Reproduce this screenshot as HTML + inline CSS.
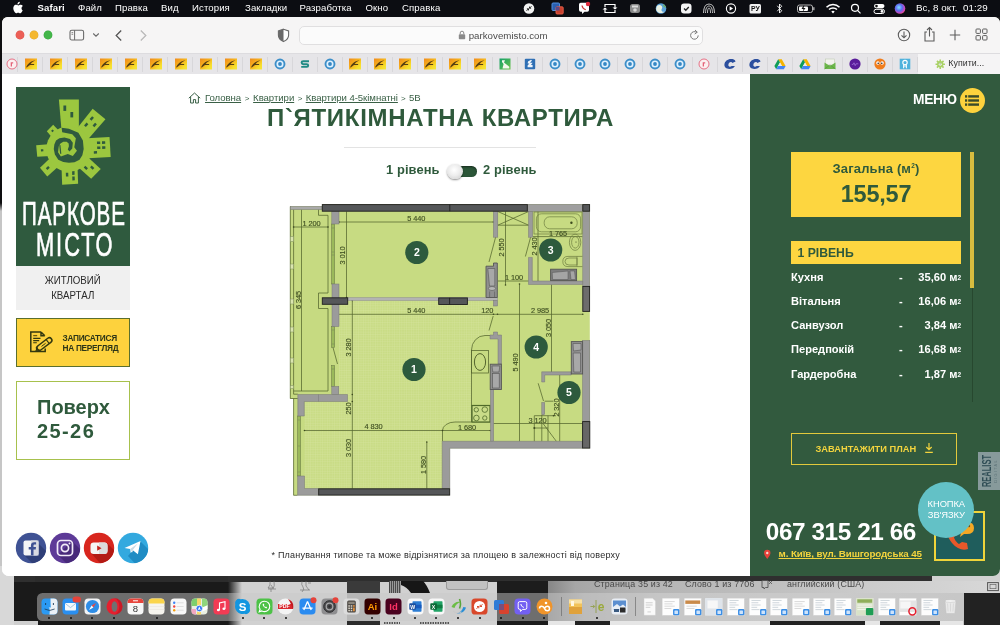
<!DOCTYPE html>
<html lang="uk">
<head>
<meta charset="utf-8">
<title>Паркове Місто</title>
<style>
*{box-sizing:border-box;margin:0;padding:0}
html,body{width:1000px;height:625px;overflow:hidden;background:#1b1b1b;font-family:"Liberation Sans",sans-serif;}
.abs{position:absolute}
#screen{position:absolute;left:0;top:0;width:1000px;height:625px;overflow:hidden;background:#1b1b1b;will-change:transform;transform:translateZ(0)}
/* menu bar */
#menubar{position:absolute;left:0;top:0;width:1000px;height:17px;background:#0c0d12;color:#fff;font-size:9.6px;line-height:17px;white-space:nowrap}
#menubar span{position:absolute;top:-1.300px;height:17px;letter-spacing:0.1px}
/* safari window */
#win{position:absolute;left:2px;top:16.500px;width:998px;height:559.500px;border-radius:6px 6px 7px 7px;overflow:hidden;background:#fff}
#toolbar{position:absolute;left:0;top:0;width:998px;height:36.500px;background:#f6f5f5}
#tabs{position:absolute;left:0;top:36.500px;width:998px;height:21px;background:#e6e5e8;border-top:1px solid #dddcdf}
#tabs .sep{position:absolute;top:3px;width:1px;height:15px;background:#d8d7da}
#tabs .ic{position:absolute;top:4px;width:12px;height:12px}
#urlbar{position:absolute;left:297px;top:9px;width:404px;height:19px;border-radius:5px;background:#fbfbfb;border:1px solid #e0dfe0}
#page{position:absolute;left:0;top:57.200px;width:998px;height:503px;background:#fff;overflow:hidden}
#right{position:absolute;left:748px;top:0;width:250px;height:503px;background:#325a3e}
</style>
</head>
<body>
<div id="screen">
<!-- desktop / other windows visible below safari -->
<div class="abs" style="left:0;top:17px;width:3px;height:608px;background:linear-gradient(180deg,#0e0e10 0,#0e0e10 186px,#c6c6c6 194px,#c6c6c6 100%)"></div>
<div class="abs" style="left:0;top:566px;width:14px;height:59px;background:#d8d8d8"></div>
<div class="abs" style="left:14px;top:570px;width:228px;height:55px;background:#1a1a1a"></div>
<div class="abs" style="left:14px;top:620.500px;width:24px;height:5px;background:#cfcfcf"></div>
<div class="abs" style="left:240px;top:566px;width:760px;height:59px;background:#d1d1d1"></div>
<div class="abs" style="left:228px;top:570px;width:14px;height:55px;background:linear-gradient(90deg,#1a1a1a,#d1d1d1)"></div>
<!-- dark strip under the window -->
<div class="abs" style="left:14px;top:574px;width:918px;height:7.500px;background:#2f2f2f"></div>
<div class="abs" style="left:35px;top:574px;width:193px;height:8px;background:#2c2c2c"></div>
<!-- fragments of the document behind -->
<div class="abs" style="left:347px;top:581px;width:33px;height:12px;background:#3a3a3a"></div><div class="abs" style="left:347px;top:593px;width:33px;height:28px;background:#a6a6a6"></div><div class="abs" style="left:347px;top:621px;width:33px;height:4px;background:#2c2c2c"></div>
<div class="abs" style="left:389px;top:581px;width:12px;height:12px;background:repeating-linear-gradient(90deg,#4a4a4a 0,#4a4a4a 1px,#9a9a9a 1px,#9a9a9a 2px)"></div><svg class="abs" style="left:401px;top:581px" width="30" height="12" viewBox="0 0 30 12"><path d="M0,0H22Q26,4 29,12H10Q6,6 0,4z" fill="#161616"/></svg>
<div class="abs" style="left:445.500px;top:581px;width:42px;height:9px;background:#c2c2c2;border:1px solid #9c9c9c;border-top:none;border-radius:0 0 3px 3px"></div><svg class="abs" style="left:262px;top:581px" width="70" height="12" viewBox="0 0 70 12"><g fill="none" stroke="#6a6a6a" stroke-width=".6"><path d="M8,0v4l-2,3h5l-2,-3M12,0q1,5 -1,8M6,8h8M9,8v3"/><path d="M40,0q-1,4 1,6t-1,5M44,0v5l3,4M38,9h10M46,2h3"/></g></svg><svg class="abs" style="left:384px;top:621px" width="70" height="4" viewBox="0 0 70 4"><path d="M0,2H16M36,2H66" stroke="#555" stroke-width="2" stroke-dasharray="1.500 1"/></svg>
<div class="abs" style="left:497px;top:581px;width:51px;height:44px;background:#1c1c1c"></div>
<!-- word status bar -->
<div class="abs" style="left:548px;top:581px;width:452px;height:12px;background:linear-gradient(90deg,#868686 0,#a6a6a6 6%,#b4b4b4 20%,#bdbdbd 45%,#cbcbcb 70%,#d8d8d8 100%)"></div>
<div class="abs" style="left:548px;top:593px;width:452px;height:32px;background:linear-gradient(90deg,#8a8a8a 0,#b0b0b0 8%,#c4c4c4 25%,#cccccc 60%,#c4c4c4 100%)"></div>
<div class="abs" style="left:963.500px;top:593px;width:37px;height:32px;background:#222"></div>
<div class="abs" style="left:548px;top:621px;width:415px;height:4px;background:#e6e6e6"></div>
<div class="abs" style="left:575px;top:621px;width:35px;height:4px;background:#222"></div>
<div class="abs" style="left:770px;top:621px;width:95px;height:4px;background:#222"></div>
<div class="abs" style="left:880px;top:621px;width:60px;height:4px;background:#222"></div>
<div class="abs" style="left:594px;top:579.300px;font-size:8.900px;color:#4a4a4a;white-space:nowrap;letter-spacing:.15px">Страница 35 из 42</div>
<div class="abs" style="left:685px;top:579.300px;font-size:8.900px;color:#4a4a4a;white-space:nowrap;letter-spacing:.15px">Слово 1 из 7706</div>
<div class="abs" style="left:787px;top:579.300px;font-size:8.900px;color:#4a4a4a;white-space:nowrap;letter-spacing:.15px">английский (США)</div>
<svg class="abs" style="left:760px;top:579px" width="14" height="12" viewBox="0 0 14 12"><path d="M2 1.500h6v7H5.500L4 10V8.500H2z" fill="none" stroke="#555" stroke-width=".9"/><path d="M9 2l3 3M12 2l-3 3" stroke="#555" stroke-width=".8"/></svg>
<svg class="abs" style="left:987px;top:581.500px" width="12" height="10" viewBox="0 0 12 10"><rect x=".6" y=".6" width="10.800" height="8" fill="none" stroke="#555" stroke-width="1"/><rect x="3" y="2.500" width="6" height="4.200" fill="none" stroke="#555" stroke-width=".6"/></svg>
<div id="menubar">
<svg class="abs" style="left:13.400px;top:1.200px" width="11" height="12.900" viewBox="0 0 170 200"><path fill="#fff" d="M150 145c-4 9-6 13-11 21-7 11-17 25-30 25-11 0-14-7-29-7s-18 7-29 7c-13 0-22-12-29-23C1 137-1 101 12 82c9-14 23-22 37-22s23 8 35 8c11 0 18-8 35-8 12 0 25 7 34 18-30 16-25 59-3 67zM97 40c6-8 11-19 9-30-10 1-21 7-28 15-6 8-11 19-9 29 11 0 22-6 28-14z"/></svg>
<span style="left:37.500px;font-weight:bold">Safari</span>
<span style="left:78px">Файл</span>
<span style="left:115px">Правка</span>
<span style="left:161px">Вид</span>
<span style="left:192px">История</span>
<span style="left:245px">Закладки</span>
<span style="left:299.500px">Разработка</span>
<span style="left:365.500px">Окно</span>
<span style="left:402px">Справка</span>
<!-- status icons -->
<svg class="abs" style="left:520px;top:0" width="480" height="17" viewBox="520 0 480 17">
 <circle cx="529" cy="8.500" r="5.300" fill="#f2f2f2"/><path d="M526.500 10.800l2-2m0 0v1.600m0-1.600h-1.600M531.500 6.200l-2 2m0 0V6.600m0 1.600h1.600" stroke="#111" stroke-width=".9" fill="none"/>
 <rect x="552" y="3" width="7.500" height="7.500" rx="1" fill="#2a5fb0" stroke="#4f8fe0" stroke-width="1"/><rect x="556" y="6.800" width="7.200" height="7.200" rx="1" fill="#c8402e" stroke="#e8604a" stroke-width=".9"/><path d="M556,6.800h3.500v3.700H556z" fill="#5a4a8a"/>
 <path d="M579 4.500q0-1.700 1.700-1.700h6.600q1.700 0 1.700 1.700v5.600q0 1.700-1.700 1.700h-2.800l-2.500 2.200v-2.200h-1.300q-1.700 0-1.700-1.700z" fill="#fff"/><circle cx="588" cy="4" r="2.200" fill="#e02a3c"/><path d="M582 5.500c.3 2 1.800 3.600 3.800 4.200" stroke="#c33" stroke-width="1.200" fill="none"/>
 <path d="M605 7V4.500h10V9M615 10v2.500h-10V8" fill="none" stroke="#fff" stroke-width="1.200"/><path d="M612.500 7.500l2.500 2 2.500-2zM602.500 9.500l2.500-2 2.500 2z" fill="#fff"/>
 <rect x="630" y="4" width="10" height="9" rx="2.500" fill="#8b8b8b"/><rect x="632" y="5.500" width="6" height="2" fill="#ddd"/><circle cx="635" cy="10" r="1.800" fill="#d8d8d8"/>
 <circle cx="661" cy="8.500" r="5.300" fill="#5aa0d8"/><path d="M657 6c2-1.500 4-1 5 .5s-1 2.500-.5 4 2 1.500 3 1c-2 2-6 2.500-8-1-.5-1.500-.3-3 .5-4.500z" fill="#e9f0e2"/><path d="M663 4.200c1.500.6 2.600 2 3 3.500-1-.2-2.200-.8-2.600-1.800z" fill="#6fb35a"/>
 <rect x="681" y="3.500" width="10.500" height="10" rx="3" fill="#f4f4f4"/><path d="M684 8.500l1.800 1.800 3-3.300" stroke="#222" stroke-width="1.300" fill="none"/>
 <path d="M703.500 13c0-5 2-9 5.500-9s5.500 4 5.500 9" fill="none" stroke="#bdbdbd" stroke-width="1.100"/><path d="M705.500 13c0-4 1.300-7 3.500-7s3.500 3 3.500 7M707.500 13c0-3 .6-5 1.500-5s1.500 2 1.500 5" fill="none" stroke="#bdbdbd" stroke-width="1"/>
 <circle cx="731" cy="8.500" r="4.600" fill="none" stroke="#fff" stroke-width="1.100"/><path d="M729.600 6.300l3.500 2.200-3.500 2.200z" fill="#fff"/>
 <rect x="749.500" y="4" width="11.500" height="9.500" rx="1.500" fill="#f0f0f0"/><text x="755.300" y="11.300" font-size="6.800" font-weight="bold" text-anchor="middle" fill="#111" font-family="Liberation Sans">РУ</text>
 <path d="M777.300 5.800l4.400 5-2.200 2.200V4l2.200 2.200-4.400 5" fill="none" stroke="#fff" stroke-width=".9"/>
 <rect x="797.500" y="5" width="15" height="7.500" rx="2" fill="none" stroke="#b5b5b5" stroke-width="1"/><rect x="813.200" y="7.200" width="1.300" height="3" fill="#b5b5b5"/><rect x="799" y="6.500" width="9" height="4.500" rx="1" fill="#fff"/><path d="M803.500 5.500l-2 3.500h2l-1 3 3-4h-2l1-2.500z" fill="#111"/>
 <path d="M826.500 7.300a9 9 0 0 1 13 0" fill="none" stroke="#fff" stroke-width="1.500"/><path d="M829 9.600a5.600 5.600 0 0 1 8 0" fill="none" stroke="#fff" stroke-width="1.500"/><path d="M831.300 11.600l1.700 1.800 1.700-1.800a2.500 2.500 0 0 0-3.400 0z" fill="#fff"/>
 <circle cx="855" cy="7.800" r="3.500" fill="none" stroke="#fff" stroke-width="1.200"/><path d="M857.500 10.400l3 3" stroke="#fff" stroke-width="1.300"/>
 <rect x="874" y="4" width="10.500" height="4.200" rx="2.100" fill="#fff"/><rect x="874" y="9.300" width="10.500" height="4.200" rx="2.100" fill="none" stroke="#fff" stroke-width="1"/><circle cx="876.500" cy="6.100" r="1.300" fill="#111"/><circle cx="882" cy="11.400" r="1.400" fill="#fff"/>
 <defs><radialGradient id="siri" cx=".4" cy=".4" r=".7"><stop offset="0" stop-color="#7ee0ff"/><stop offset=".45" stop-color="#5b6cf0"/><stop offset=".8" stop-color="#d345b8"/><stop offset="1" stop-color="#ff6a5a"/></radialGradient></defs>
 <circle cx="900" cy="8.500" r="5.300" fill="url(#siri)"/>
</svg>
<span style="left:916px;font-size:9.800px;letter-spacing:.05px">Вс, 8 окт.&nbsp; 01:29</span>
</div>
<div id="win">
<div id="toolbar">
<div class="abs" style="left:14.100px;top:14.600px;width:8.400px;height:8.400px;border-radius:50%;background:#ec5f57;box-shadow:0 0 0 .4px #d34a43"></div>
<div class="abs" style="left:28.100px;top:14.600px;width:8.400px;height:8.400px;border-radius:50%;background:#f4b72f;box-shadow:0 0 0 .4px #d9a024"></div>
<div class="abs" style="left:41.800px;top:14.600px;width:8.400px;height:8.400px;border-radius:50%;background:#43b649;box-shadow:0 0 0 .4px #2f9e37"></div>
<svg class="abs" style="left:67px;top:12px" width="17" height="13" viewBox="0 0 17 13"><rect x="1" y="1.200" width="13.600" height="9.800" rx="1.800" fill="none" stroke="#6b6b6b" stroke-width="1.100"/><path d="M5.600 1.200v9.800" stroke="#6b6b6b" stroke-width="1"/><path d="M2.500 3.600h1.700M2.500 5.300h1.700" stroke="#6b6b6b" stroke-width=".8"/></svg>
<svg class="abs" style="left:90px;top:15.500px" width="8" height="6" viewBox="0 0 8 6"><path d="M1.200 1.500L4 4.200l2.800-2.700" fill="none" stroke="#6b6b6b" stroke-width="1.100"/></svg>
<svg class="abs" style="left:112px;top:12px" width="10" height="13" viewBox="0 0 10 13"><path d="M7.200 1.500L2.200 6.500l5 5" fill="none" stroke="#555" stroke-width="1.300"/></svg>
<svg class="abs" style="left:136px;top:12px" width="10" height="13" viewBox="0 0 10 13"><path d="M2.800 1.500l5 5-5 5" fill="none" stroke="#b9b9b9" stroke-width="1.300"/></svg>
<svg class="abs" style="left:275px;top:11px" width="13" height="15" viewBox="0 0 13 15"><path d="M6.500 1.200L11.600 3v4.200c0 3-2 5-5.100 6.400C3.400 12.200 1.400 10.200 1.400 7.200V3z" fill="#fff" stroke="#6a6a6a" stroke-width="1.100"/><path d="M6.500 1.200L1.400 3v4.200c0 3 2 5 5.100 6.400z" fill="#6a6a6a"/></svg>
<div id="urlbar"></div>
<svg class="abs" style="left:456px;top:13px" width="8" height="10" viewBox="0 0 8 10"><rect x=".8" y="4.200" width="6.400" height="5" rx=".8" fill="#8a8a8a"/><path d="M2.200 4.200V3a1.800 1.800 0 0 1 3.600 0v1.200" fill="none" stroke="#8a8a8a" stroke-width="1"/></svg>
<div class="abs" style="left:466.700px;top:12px;font-size:9.700px;line-height:13px;color:#4b4b4b;letter-spacing:.02px;white-space:nowrap">parkovemisto.com</div>
<svg class="abs" style="left:687px;top:12.500px" width="11" height="12" viewBox="0 0 11 12"><path d="M9.200 6.400a3.800 3.800 0 1 1-1.500-3" fill="none" stroke="#7a7a7a" stroke-width="1"/><path d="M6 1l2.300 2.200L5.700 5" fill="none" stroke="#7a7a7a" stroke-width="1"/></svg>
<svg class="abs" style="left:895px;top:11px" width="14" height="14" viewBox="0 0 14 14"><circle cx="7" cy="7" r="5.700" fill="none" stroke="#5c5c5c" stroke-width="1.100"/><path d="M7 3.600v6M4.500 7.300L7 9.800l2.500-2.500" fill="none" stroke="#5c5c5c" stroke-width="1.100"/></svg>
<svg class="abs" style="left:921px;top:9px" width="13" height="17" viewBox="0 0 13 17"><path d="M4 6H2v9h9V6H9" fill="none" stroke="#5c5c5c" stroke-width="1.100"/><path d="M6.500 10.500V1.500M4 4l2.500-2.500L9 4" fill="none" stroke="#5c5c5c" stroke-width="1.100"/></svg>
<svg class="abs" style="left:947px;top:12px" width="12" height="12" viewBox="0 0 12 12"><path d="M6 .8v10.400M.8 6h10.400" stroke="#5c5c5c" stroke-width="1.100"/></svg>
<svg class="abs" style="left:973px;top:11.500px" width="13" height="13" viewBox="0 0 13 13"><rect x="1" y="1" width="4.400" height="4.400" rx=".8" fill="none" stroke="#5c5c5c" stroke-width="1"/><rect x="7.600" y="1" width="4.400" height="4.400" rx=".8" fill="none" stroke="#5c5c5c" stroke-width="1"/><rect x="1" y="7.600" width="4.400" height="4.400" rx=".8" fill="none" stroke="#5c5c5c" stroke-width="1"/><rect x="7.600" y="7.600" width="4.400" height="4.400" rx=".8" fill="none" stroke="#5c5c5c" stroke-width="1"/></svg>
</div>
<div id="tabs">
<div class="sep" style="left:15.0px"></div>
<div class="sep" style="left:40.0px"></div>
<div class="sep" style="left:65.0px"></div>
<div class="sep" style="left:90.0px"></div>
<div class="sep" style="left:115.0px"></div>
<div class="sep" style="left:140.0px"></div>
<div class="sep" style="left:165.0px"></div>
<div class="sep" style="left:190.0px"></div>
<div class="sep" style="left:215.0px"></div>
<div class="sep" style="left:240.0px"></div>
<div class="sep" style="left:265.0px"></div>
<div class="sep" style="left:290.0px"></div>
<div class="sep" style="left:315.0px"></div>
<div class="sep" style="left:340.0px"></div>
<div class="sep" style="left:365.0px"></div>
<div class="sep" style="left:390.0px"></div>
<div class="sep" style="left:415.0px"></div>
<div class="sep" style="left:440.0px"></div>
<div class="sep" style="left:465.0px"></div>
<div class="sep" style="left:490.0px"></div>
<div class="sep" style="left:515.0px"></div>
<div class="sep" style="left:540.0px"></div>
<div class="sep" style="left:565.0px"></div>
<div class="sep" style="left:590.0px"></div>
<div class="sep" style="left:615.0px"></div>
<div class="sep" style="left:640.0px"></div>
<div class="sep" style="left:665.0px"></div>
<div class="sep" style="left:690.0px"></div>
<div class="sep" style="left:715.0px"></div>
<div class="sep" style="left:740.0px"></div>
<div class="sep" style="left:765.0px"></div>
<div class="sep" style="left:790.0px"></div>
<div class="sep" style="left:815.0px"></div>
<div class="sep" style="left:840.0px"></div>
<div class="sep" style="left:865.0px"></div>
<div class="sep" style="left:890.0px"></div>
<div class="sep" style="left:915.0px"></div>
<svg class="ic" style="left:4.0px" viewBox="0 0 12 12"><circle cx="6" cy="6" r="5" fill="#fbeff0" stroke="#e4647a" stroke-width=".9"/><path d="M4.700 8.400V4.200h2.500v1.400H6v2.800z" fill="#e4647a"/></svg>
<svg class="ic" style="left:22.5px" viewBox="0 0 12 12"><defs><linearGradient id="yf1" x1="0" y1="0" x2="1" y2="1"><stop offset="0" stop-color="#f08a1c"/><stop offset=".45" stop-color="#f6b21c"/><stop offset=".75" stop-color="#f7de2a"/><stop offset="1" stop-color="#f3e640"/></linearGradient></defs><rect x="0" y=".5" width="12" height="11" fill="url(#yf1)"/><path d="M1 9.500C2.500 6 5 3.300 10.500 2.200 8 3.500 6.600 4.600 5.600 5.900h3.800l-.6 1H5C3.500 8 2.500 9 1 9.500z" fill="#3a2a10" opacity=".85"/></svg>
<svg class="ic" style="left:47.5px" viewBox="0 0 12 12"><defs><linearGradient id="yf2" x1="0" y1="0" x2="1" y2="1"><stop offset="0" stop-color="#f08a1c"/><stop offset=".45" stop-color="#f6b21c"/><stop offset=".75" stop-color="#f7de2a"/><stop offset="1" stop-color="#f3e640"/></linearGradient></defs><rect x="0" y=".5" width="12" height="11" fill="url(#yf2)"/><path d="M1 9.500C2.500 6 5 3.300 10.500 2.200 8 3.500 6.600 4.600 5.600 5.900h3.800l-.6 1H5C3.500 8 2.500 9 1 9.500z" fill="#3a2a10" opacity=".85"/></svg>
<svg class="ic" style="left:72.5px" viewBox="0 0 12 12"><defs><linearGradient id="yf3" x1="0" y1="0" x2="1" y2="1"><stop offset="0" stop-color="#f08a1c"/><stop offset=".45" stop-color="#f6b21c"/><stop offset=".75" stop-color="#f7de2a"/><stop offset="1" stop-color="#f3e640"/></linearGradient></defs><rect x="0" y=".5" width="12" height="11" fill="url(#yf3)"/><path d="M1 9.500C2.500 6 5 3.300 10.500 2.200 8 3.500 6.600 4.600 5.600 5.900h3.800l-.6 1H5C3.500 8 2.500 9 1 9.500z" fill="#3a2a10" opacity=".85"/></svg>
<svg class="ic" style="left:97.5px" viewBox="0 0 12 12"><defs><linearGradient id="yf4" x1="0" y1="0" x2="1" y2="1"><stop offset="0" stop-color="#f08a1c"/><stop offset=".45" stop-color="#f6b21c"/><stop offset=".75" stop-color="#f7de2a"/><stop offset="1" stop-color="#f3e640"/></linearGradient></defs><rect x="0" y=".5" width="12" height="11" fill="url(#yf4)"/><path d="M1 9.500C2.500 6 5 3.300 10.500 2.200 8 3.500 6.600 4.600 5.600 5.900h3.800l-.6 1H5C3.500 8 2.500 9 1 9.500z" fill="#3a2a10" opacity=".85"/></svg>
<svg class="ic" style="left:122.5px" viewBox="0 0 12 12"><defs><linearGradient id="yf5" x1="0" y1="0" x2="1" y2="1"><stop offset="0" stop-color="#f08a1c"/><stop offset=".45" stop-color="#f6b21c"/><stop offset=".75" stop-color="#f7de2a"/><stop offset="1" stop-color="#f3e640"/></linearGradient></defs><rect x="0" y=".5" width="12" height="11" fill="url(#yf5)"/><path d="M1 9.500C2.500 6 5 3.300 10.500 2.200 8 3.500 6.600 4.600 5.600 5.900h3.800l-.6 1H5C3.500 8 2.500 9 1 9.500z" fill="#3a2a10" opacity=".85"/></svg>
<svg class="ic" style="left:147.5px" viewBox="0 0 12 12"><defs><linearGradient id="yf6" x1="0" y1="0" x2="1" y2="1"><stop offset="0" stop-color="#f08a1c"/><stop offset=".45" stop-color="#f6b21c"/><stop offset=".75" stop-color="#f7de2a"/><stop offset="1" stop-color="#f3e640"/></linearGradient></defs><rect x="0" y=".5" width="12" height="11" fill="url(#yf6)"/><path d="M1 9.500C2.500 6 5 3.300 10.500 2.200 8 3.500 6.600 4.600 5.600 5.900h3.800l-.6 1H5C3.500 8 2.500 9 1 9.500z" fill="#3a2a10" opacity=".85"/></svg>
<svg class="ic" style="left:172.5px" viewBox="0 0 12 12"><defs><linearGradient id="yf7" x1="0" y1="0" x2="1" y2="1"><stop offset="0" stop-color="#f08a1c"/><stop offset=".45" stop-color="#f6b21c"/><stop offset=".75" stop-color="#f7de2a"/><stop offset="1" stop-color="#f3e640"/></linearGradient></defs><rect x="0" y=".5" width="12" height="11" fill="url(#yf7)"/><path d="M1 9.500C2.500 6 5 3.300 10.500 2.200 8 3.500 6.600 4.600 5.600 5.900h3.800l-.6 1H5C3.500 8 2.500 9 1 9.500z" fill="#3a2a10" opacity=".85"/></svg>
<svg class="ic" style="left:197.5px" viewBox="0 0 12 12"><defs><linearGradient id="yf8" x1="0" y1="0" x2="1" y2="1"><stop offset="0" stop-color="#f08a1c"/><stop offset=".45" stop-color="#f6b21c"/><stop offset=".75" stop-color="#f7de2a"/><stop offset="1" stop-color="#f3e640"/></linearGradient></defs><rect x="0" y=".5" width="12" height="11" fill="url(#yf8)"/><path d="M1 9.500C2.500 6 5 3.300 10.500 2.200 8 3.500 6.600 4.600 5.600 5.900h3.800l-.6 1H5C3.500 8 2.500 9 1 9.500z" fill="#3a2a10" opacity=".85"/></svg>
<svg class="ic" style="left:222.5px" viewBox="0 0 12 12"><defs><linearGradient id="yf9" x1="0" y1="0" x2="1" y2="1"><stop offset="0" stop-color="#f08a1c"/><stop offset=".45" stop-color="#f6b21c"/><stop offset=".75" stop-color="#f7de2a"/><stop offset="1" stop-color="#f3e640"/></linearGradient></defs><rect x="0" y=".5" width="12" height="11" fill="url(#yf9)"/><path d="M1 9.500C2.500 6 5 3.300 10.500 2.200 8 3.500 6.600 4.600 5.600 5.900h3.800l-.6 1H5C3.500 8 2.500 9 1 9.500z" fill="#3a2a10" opacity=".85"/></svg>
<svg class="ic" style="left:247.5px" viewBox="0 0 12 12"><defs><linearGradient id="yf10" x1="0" y1="0" x2="1" y2="1"><stop offset="0" stop-color="#f08a1c"/><stop offset=".45" stop-color="#f6b21c"/><stop offset=".75" stop-color="#f7de2a"/><stop offset="1" stop-color="#f3e640"/></linearGradient></defs><rect x="0" y=".5" width="12" height="11" fill="url(#yf10)"/><path d="M1 9.500C2.500 6 5 3.300 10.500 2.200 8 3.500 6.600 4.600 5.600 5.900h3.800l-.6 1H5C3.500 8 2.500 9 1 9.500z" fill="#3a2a10" opacity=".85"/></svg>
<svg class="ic" style="left:271.5px" viewBox="0 0 12 12"><circle cx="6" cy="6" r="4.500" fill="#dff1ff" stroke="#3d8fc9" stroke-width="1.900"/><circle cx="6" cy="6" r="1.900" fill="#3587c4"/></svg>
<svg class="ic" style="left:297.0px" viewBox="0 0 12 12"><path d="M10 2.600H4.200Q2.600 2.600 2.600 4t1.600 1.600h3.600q1.400 0 1.400 1.300T7.800 8.300H2.200" fill="none" stroke="#1f8a84" stroke-width="1.900" transform="translate(0,.6)"/></svg>
<svg class="ic" style="left:321.5px" viewBox="0 0 12 12"><circle cx="6" cy="6" r="4.500" fill="#dff1ff" stroke="#3d8fc9" stroke-width="1.900"/><circle cx="6" cy="6" r="1.900" fill="#3587c4"/></svg>
<svg class="ic" style="left:347.0px" viewBox="0 0 12 12"><defs><linearGradient id="yf14" x1="0" y1="0" x2="1" y2="1"><stop offset="0" stop-color="#f08a1c"/><stop offset=".45" stop-color="#f6b21c"/><stop offset=".75" stop-color="#f7de2a"/><stop offset="1" stop-color="#f3e640"/></linearGradient></defs><rect x="0" y=".5" width="12" height="11" fill="url(#yf14)"/><path d="M1 9.500C2.500 6 5 3.300 10.500 2.200 8 3.500 6.600 4.600 5.600 5.900h3.800l-.6 1H5C3.500 8 2.500 9 1 9.500z" fill="#3a2a10" opacity=".85"/></svg>
<svg class="ic" style="left:372.0px" viewBox="0 0 12 12"><defs><linearGradient id="yf15" x1="0" y1="0" x2="1" y2="1"><stop offset="0" stop-color="#f08a1c"/><stop offset=".45" stop-color="#f6b21c"/><stop offset=".75" stop-color="#f7de2a"/><stop offset="1" stop-color="#f3e640"/></linearGradient></defs><rect x="0" y=".5" width="12" height="11" fill="url(#yf15)"/><path d="M1 9.500C2.500 6 5 3.300 10.500 2.200 8 3.500 6.600 4.600 5.600 5.900h3.800l-.6 1H5C3.500 8 2.500 9 1 9.500z" fill="#3a2a10" opacity=".85"/></svg>
<svg class="ic" style="left:397.0px" viewBox="0 0 12 12"><defs><linearGradient id="yf16" x1="0" y1="0" x2="1" y2="1"><stop offset="0" stop-color="#f08a1c"/><stop offset=".45" stop-color="#f6b21c"/><stop offset=".75" stop-color="#f7de2a"/><stop offset="1" stop-color="#f3e640"/></linearGradient></defs><rect x="0" y=".5" width="12" height="11" fill="url(#yf16)"/><path d="M1 9.500C2.500 6 5 3.300 10.500 2.200 8 3.500 6.600 4.600 5.600 5.900h3.800l-.6 1H5C3.500 8 2.500 9 1 9.500z" fill="#3a2a10" opacity=".85"/></svg>
<svg class="ic" style="left:422.0px" viewBox="0 0 12 12"><defs><linearGradient id="yf17" x1="0" y1="0" x2="1" y2="1"><stop offset="0" stop-color="#f08a1c"/><stop offset=".45" stop-color="#f6b21c"/><stop offset=".75" stop-color="#f7de2a"/><stop offset="1" stop-color="#f3e640"/></linearGradient></defs><rect x="0" y=".5" width="12" height="11" fill="url(#yf17)"/><path d="M1 9.500C2.500 6 5 3.300 10.500 2.200 8 3.500 6.600 4.600 5.600 5.900h3.800l-.6 1H5C3.500 8 2.500 9 1 9.500z" fill="#3a2a10" opacity=".85"/></svg>
<svg class="ic" style="left:447.0px" viewBox="0 0 12 12"><defs><linearGradient id="yf18" x1="0" y1="0" x2="1" y2="1"><stop offset="0" stop-color="#f08a1c"/><stop offset=".45" stop-color="#f6b21c"/><stop offset=".75" stop-color="#f7de2a"/><stop offset="1" stop-color="#f3e640"/></linearGradient></defs><rect x="0" y=".5" width="12" height="11" fill="url(#yf18)"/><path d="M1 9.500C2.500 6 5 3.300 10.500 2.200 8 3.500 6.600 4.600 5.600 5.900h3.800l-.6 1H5C3.500 8 2.500 9 1 9.500z" fill="#3a2a10" opacity=".85"/></svg>
<svg class="ic" style="left:472.0px" viewBox="0 0 12 12"><defs><linearGradient id="yf19" x1="0" y1="0" x2="1" y2="1"><stop offset="0" stop-color="#f08a1c"/><stop offset=".45" stop-color="#f6b21c"/><stop offset=".75" stop-color="#f7de2a"/><stop offset="1" stop-color="#f3e640"/></linearGradient></defs><rect x="0" y=".5" width="12" height="11" fill="url(#yf19)"/><path d="M1 9.500C2.500 6 5 3.300 10.500 2.200 8 3.500 6.600 4.600 5.600 5.900h3.800l-.6 1H5C3.500 8 2.500 9 1 9.500z" fill="#3a2a10" opacity=".85"/></svg>
<svg class="ic" style="left:497.0px" viewBox="0 0 12 12"><defs><linearGradient id="gf20" x1="0" y1="0" x2="1" y2="1"><stop offset="0" stop-color="#14a06a"/><stop offset="1" stop-color="#6cc24a"/></linearGradient></defs><rect x=".5" y=".5" width="11" height="11" fill="url(#gf20)"/><path d="M3 2.200h3L5 4.600l5.300 4.200v1.700H3.500L4.600 6 3 4z" fill="#f4f8ee"/></svg>
<svg class="ic" style="left:522.0px" viewBox="0 0 12 12"><rect x=".8" y=".8" width="10.400" height="10.400" rx="1" fill="#2f6fb4"/><path d="M4 3.400L7 1.800l1 .8-2 2.200h2.600L7 7h1.600v2.200H3.600V7.600L5.400 5.500H3.700z" fill="#eef4fb"/></svg>
<svg class="ic" style="left:547.0px" viewBox="0 0 12 12"><circle cx="6" cy="6" r="4.500" fill="#dff1ff" stroke="#3d8fc9" stroke-width="1.900"/><circle cx="6" cy="6" r="1.900" fill="#3587c4"/></svg>
<svg class="ic" style="left:572.0px" viewBox="0 0 12 12"><circle cx="6" cy="6" r="4.500" fill="#dff1ff" stroke="#3d8fc9" stroke-width="1.900"/><circle cx="6" cy="6" r="1.900" fill="#3587c4"/></svg>
<svg class="ic" style="left:597.0px" viewBox="0 0 12 12"><circle cx="6" cy="6" r="4.500" fill="#dff1ff" stroke="#3d8fc9" stroke-width="1.900"/><circle cx="6" cy="6" r="1.900" fill="#3587c4"/></svg>
<svg class="ic" style="left:622.0px" viewBox="0 0 12 12"><circle cx="6" cy="6" r="4.500" fill="#dff1ff" stroke="#3d8fc9" stroke-width="1.900"/><circle cx="6" cy="6" r="1.900" fill="#3587c4"/></svg>
<svg class="ic" style="left:647.0px" viewBox="0 0 12 12"><circle cx="6" cy="6" r="4.500" fill="#dff1ff" stroke="#3d8fc9" stroke-width="1.900"/><circle cx="6" cy="6" r="1.900" fill="#3587c4"/></svg>
<svg class="ic" style="left:672.0px" viewBox="0 0 12 12"><circle cx="6" cy="6" r="4.500" fill="#dff1ff" stroke="#3d8fc9" stroke-width="1.900"/><circle cx="6" cy="6" r="1.900" fill="#3587c4"/></svg>
<svg class="ic" style="left:696.3px" viewBox="0 0 12 12"><circle cx="6" cy="6" r="5" fill="#fbeff0" stroke="#e4647a" stroke-width=".9"/><path d="M4.700 8.400V4.200h2.500v1.400H6v2.800z" fill="#e4647a"/></svg>
<svg class="ic" style="left:721.7px" viewBox="0 0 12 12"><path d="M11.600 3.400C11 1.600 9 1 7 1 3.600 1 .6 3.400.4 6.600.2 9.300 2.300 11 5.300 11c2.600 0 4.700-1 5.600-3H7.600c-.4.500-1 .7-1.600.7-1.200 0-1.800-.8-1.600-2.100C4.600 5 5.600 4 6.900 4c.8 0 1.300.3 1.500.9z" fill="#2c4f9e"/></svg>
<svg class="ic" style="left:746.6px" viewBox="0 0 12 12"><path d="M11.600 3.400C11 1.600 9 1 7 1 3.600 1 .6 3.400.4 6.600.2 9.300 2.300 11 5.300 11c2.600 0 4.700-1 5.600-3H7.600c-.4.500-1 .7-1.600.7-1.200 0-1.800-.8-1.600-2.100C4.600 5 5.600 4 6.900 4c.8 0 1.300.3 1.500.9z" fill="#2c4f9e"/></svg>
<svg class="ic" style="left:771.5px" viewBox="0 0 12 12"><path d="M4.200 1.200h3.600L11.600 8H8z" fill="#f4b400"/><path d="M4.200 1.200L.4 8l1.800 3.200L6 4.400z" fill="#0f9d58"/><path d="M2.200 11.200h7.600L11.600 8H4z" fill="#4285f4"/><path d="M6 4.400L4 8h4z" fill="#e9e8ea"/></svg>
<svg class="ic" style="left:796.5px" viewBox="0 0 12 12"><path d="M4.200 1.200h3.600L11.600 8H8z" fill="#f4b400"/><path d="M4.200 1.200L.4 8l1.800 3.200L6 4.400z" fill="#0f9d58"/><path d="M2.200 11.200h7.600L11.600 8H4z" fill="#4285f4"/><path d="M6 4.400L4 8h4z" fill="#e9e8ea"/></svg>
<svg class="ic" style="left:821.5px" viewBox="0 0 12 12"><rect x="1.500" y="1" width="9" height="6" fill="#f2f2ee" stroke="#b9c7a8" stroke-width=".5"/><path d="M.5 4.500L6 8l5.500-3.500V11H.5z" fill="#6db64c"/><path d="M.5 11L6 7l5.500 4" fill="none" stroke="#4f9a35" stroke-width=".6"/></svg>
<svg class="ic" style="left:846.5px" viewBox="0 0 12 12"><circle cx="6" cy="6" r="5.600" fill="#5a1c9a"/><path d="M2.800 6.400h1.400l.8-1.600 1.200 2.800.9-1.800h2.200" fill="none" stroke="#a77be0" stroke-width=".7"/></svg>
<svg class="ic" style="left:871.5px" viewBox="0 0 12 12"><circle cx="6" cy="6" r="5.600" fill="#f07d1c"/><circle cx="3.900" cy="5" r="1.700" fill="#fff"/><circle cx="8.100" cy="5" r="1.700" fill="#fff"/><circle cx="4.200" cy="5.200" r=".8" fill="#222"/><circle cx="7.800" cy="5.200" r=".8" fill="#222"/></svg>
<svg class="ic" style="left:896.5px" viewBox="0 0 12 12"><rect x=".7" y=".7" width="10.600" height="10.600" fill="#4fb2dc"/><circle cx="6" cy="4.600" r="2.200" fill="none" stroke="#fff" stroke-width="1.100"/><path d="M4.600 6.500v3.800M7.400 6.500v3.800M6 7v2.200" stroke="#fff" stroke-width="1"/></svg>
<div class="abs" style="left:915.500px;top:0;width:83px;height:21px;background:#f5f4f5"></div>
<svg class="abs" style="left:932.500px;top:4.800px" width="10.500" height="10.500" viewBox="0 0 12 12" opacity=".85"><g fill="#9ccb4c"><circle cx="6" cy="6" r="3.600"/><g stroke="#9ccb4c" stroke-width="1.800"><path d="M6 .6v10.800M.6 6h10.800M2.200 2.200l7.600 7.600M9.800 2.200L2.200 9.800"/></g></g><circle cx="6" cy="6" r="1.700" fill="#f5f4f5"/><path d="M5.200 4.800c.8-.8 2 0 1.400 1-.5.700-1.600.4-1.400-.5" stroke="#5d9e2a" stroke-width=".6" fill="none"/></svg>
<div class="abs" style="left:946.300px;top:3.300px;font-size:8.800px;line-height:13px;color:#333;letter-spacing:.05px;white-space:nowrap">Купити...</div>
</div>
<div id="page"><div id="pc" class="abs" style="left:-2px;top:-73.700px;width:1000px;height:625px">
<!-- right green panel -->
<div class="abs" style="left:750px;top:73px;width:250px;height:503px;background:#325a3e"></div>
<!-- logo -->
<div class="abs" style="left:16.200px;top:86.500px;width:113.500px;height:179px;background:#2f5a3e"></div>
<svg class="abs" style="left:16.200px;top:86.500px" width="113.500" height="114" viewBox="0 0 113.500 114">
 <g transform="translate(52.900,62)" fill="#9cc73f">
  <g transform="rotate(0)"><path d="M-10,-49.500L10,-49.500L10,-14H-7z"/><g fill="#2f5a3e"><rect x="-5.500" y="-43.500" width="2.800" height="5.400"/><rect x="1.500" y="-37" width="2.800" height="5.400"/></g></g>
  <g transform="rotate(41)"><path d="M-8.500,-46L8,-46.500L8,-14H-7z"/><g fill="#2f5a3e"><rect x="-4" y="-40" width="2.400" height="3.800"/><rect x="2.500" y="-37" width="2.400" height="3.800"/><rect x="-4" y="-31.500" width="2.400" height="3.800"/></g></g>
  <g transform="rotate(88)"><path d="M-10.500,-41L9.500,-41.500L10,-14H-10z"/><g fill="#2f5a3e"><rect x="-6.500" y="-36.500" width="2.600" height="3.200"/><rect x="-6.500" y="-31.500" width="2.600" height="3.200"/><rect x="-1.500" y="-31.500" width="2.600" height="3.200"/><rect x="3" y="-28" width="2.600" height="3.200"/><rect x="-1.500" y="-36.500" width="2.600" height="3.200"/></g></g>
  <g transform="rotate(133)"><path d="M-7,-37L6.500,-36.500L7,-14H-7z"/><g fill="#2f5a3e"><rect x="-3.500" y="-31.500" width="2.400" height="3.600"/><rect x="1" y="-27" width="2.400" height="3.600"/></g></g>
  <g transform="rotate(178)"><path d="M-8,-35L8,-35.500L8,-14H-8z"/><g fill="#2f5a3e"><rect x="-4.800" y="-31.500" width="2.400" height="3.800"/><rect x="-4.800" y="-26" width="2.400" height="3.800"/><rect x="1.500" y="-27.500" width="2.400" height="3.800"/></g></g>
  <g transform="rotate(228)"><path d="M-6,-34.500L5.500,-34L6,-14H-6z"/><g fill="#2f5a3e"><rect x="-1.200" y="-30" width="2.400" height="3.200"/></g></g>
  <g transform="rotate(267)"><path d="M-6,-32L5.500,-32.500L6,-14H-6z"/><g fill="#2f5a3e"><rect x="-1" y="-28" width="2.200" height="2.400"/></g></g>
  <g transform="rotate(318)"><path d="M-4.500,-28L4.500,-28.500L5,-14H-5z"/><g fill="#2f5a3e"><rect x="-1" y="-25.500" width="2" height="2"/></g></g>
  <circle r="22.600"/>
  <g transform="scale(.112) translate(-300,-290)">
   <path d="M235,100L300,110L385,145L425,215L432,290L420,345L395,385L350,408L300,412L250,405L205,385L175,340L165,290L170,250L185,215L215,195L260,188L310,200L335,235L330,285L305,312L290,295L300,265L298,240L280,225L250,225L225,240L210,265L203,318L228,358L290,335L335,352L372,305L348,275L362,195L330,158L240,140Z" fill="#2f5a3e"/>
   <path d="M219,255L227,332" stroke="#2f5a3e" stroke-width="11" fill="none"/>
  </g>
 </g>
</svg>
<div id="lg1" class="abs" style="left:22px;top:196px;font-size:33px;line-height:36px;color:#fff;-webkit-text-stroke:.7px #fff;white-space:nowrap;transform-origin:0 0;transform:scaleX(.623);letter-spacing:1.500px">ПАРКОВЕ</div>
<div id="lg2" class="abs" style="left:36px;top:227.300px;font-size:33px;line-height:36px;color:#fff;-webkit-text-stroke:.7px #fff;white-space:nowrap;transform-origin:0 0;transform:scaleX(.66);letter-spacing:3px">МІСТО</div>
<div class="abs" style="left:16.200px;top:265.500px;width:113.500px;height:44.500px;background:#f0f0f0"></div>
<div class="abs" style="left:16.200px;top:273px;width:113.500px;text-align:center;font-size:11px;line-height:14.600px;color:#2a2a2a;transform:scaleX(.885);transform-origin:50% 0">ЖИТЛОВИЙ<br>КВАРТАЛ</div>
<!-- yellow button -->
<div class="abs" style="left:16.200px;top:318px;width:114px;height:49px;background:#fdd23d;border:1.200px solid #5a6f2e"></div>
<svg class="abs" style="left:29px;top:330px" width="24" height="24" viewBox="0 0 24 24"><g fill="none" stroke="#33380f" stroke-width="1.500"><path d="M12,2H1.800V21.500H16.200V18.500M12,2L15.800,5.800M12,2V5.800H15.800"/></g><g stroke="#33380f"><path d="M4.200,5.600H8.200" stroke-width="1.300" stroke="#6a5a10"/><path d="M4.200,8.400H11.500M4.200,10.600H10.200M4.200,12.800H7.800" stroke-width="1.100"/></g><path d="M8.300,16L6.200,21.300L11.700,19.800z" fill="#33380f"/><path d="M20.300,10.300L10.200,18" stroke="#33380f" stroke-width="6.600" stroke-linecap="round"/><path d="M20.300,10.300L10.600,17.700" stroke="#fdd23d" stroke-width="3.600" stroke-linecap="round"/><path d="M17,9.300L20.300,13.600" stroke="#33380f" stroke-width="1.100"/><path d="M16.600,13.300L12.500,16.400" stroke="#33380f" stroke-width="1"/></svg>
<div class="abs" style="left:62.500px;top:332.500px;font-size:8.300px;line-height:10.300px;font-weight:bold;color:#2c3517;white-space:nowrap;letter-spacing:-.3px">ЗАПИСАТИСЯ<br>НА ПЕРЕГЛЯД</div>
<!-- floor box -->
<div class="abs" style="left:16.200px;top:381px;width:114px;height:79px;background:#fff;border:1.700px solid #a7c14d"></div>
<div class="abs" style="left:37px;top:394.500px;font-size:20px;line-height:24.300px;font-weight:bold;color:#2f5a3c;white-space:nowrap">Поверх<br><span style="letter-spacing:1.400px">25-26</span></div>
<!-- social -->
<svg class="abs" style="left:14px;top:530px" width="140" height="36" viewBox="14 530 140 36">
 <defs>
  <clipPath id="c1"><circle cx="31" cy="548" r="15.200"/></clipPath><clipPath id="c2"><circle cx="65" cy="548" r="15.200"/></clipPath><clipPath id="c3"><circle cx="99" cy="548" r="15.200"/></clipPath><clipPath id="c4"><circle cx="133" cy="548" r="15.200"/></clipPath>
 </defs>
 <circle cx="31" cy="548" r="15.200" fill="#3f5294"/><g clip-path="url(#c1)"><path d="M24 555l13-13 14 14-13 13z" fill="#2f3f78"/></g>
 <rect x="23.500" y="540.500" width="15" height="15" rx="2" fill="#f4f4f6"/><path d="M31 540.500h7.500v15H31z" fill="#d9dbe2"/><path d="M33.500 555.500v-6h2.200l.3-2.400h-2.500v-1.400c0-.8.300-1.200 1.300-1.200h1.300v-2.200c-.6-.1-1.300-.1-1.900-.1-2 0-3.300 1.200-3.300 3.300v1.600h-2.200v2.400h2.200v6z" fill="#3f5294"/>
 <circle cx="65" cy="548" r="15.200" fill="#5d3a97"/><g clip-path="url(#c2)"><path d="M58 555l14-14 14 14-14 14z" fill="#47297a"/></g>
 <rect x="57.500" y="540.500" width="15" height="15" rx="3.500" fill="none" stroke="#f1ebf8" stroke-width="1.700"/><circle cx="65" cy="548" r="3.600" fill="none" stroke="#f1ebf8" stroke-width="1.700"/><circle cx="69.500" cy="543.600" r="1" fill="#f1ebf8"/>
 <circle cx="99" cy="548" r="15.200" fill="#d8261e"/><g clip-path="url(#c3)"><path d="M91 553l16-10 14 14-14 14z" fill="#b31a14"/></g>
 <rect x="90.500" y="542.500" width="17" height="11.500" rx="3.200" fill="#f6f4f4"/><path d="M99 542.500h5.300q3.200 0 3.200 3.200v5.100q0 3.200-3.200 3.200H99z" fill="#dcdcdc"/><path d="M97.200 545.600l4.300 2.600-4.300 2.600z" fill="#c3201a"/>
 <circle cx="133" cy="548" r="15.200" fill="#33a9df"/><g clip-path="url(#c4)"><path d="M128 556l12-15 14 14-14 14z" fill="#1f8cc4"/></g>
 <path d="M124.500 548l16-7-2.600 13.200-4.800-3.600-2.400 2.400-.5-4z" fill="#fff"/><path d="M130.200 549l7.600-5.600-5 6.600-.3 2.600z" fill="#c9dbe6"/>
</svg>
<!-- breadcrumbs -->
<svg class="abs" style="left:188px;top:91.500px" width="13" height="12" viewBox="0 0 13 12"><path d="M.8 6.200L6.500 1l5.700 5.200M2.600 5v6h2.800V7.600h2.200V11h2.800V5" fill="none" stroke="#3a6046" stroke-width="1"/></svg>
<div id="bc" class="abs" style="left:205px;top:92px;font-size:9.600px;line-height:12px;color:#3a6046;white-space:nowrap;letter-spacing:-.05px"><span id="bc1" style="text-decoration:underline">Головна</span><span style="display:inline-block;width:12px;text-align:center;font-size:8px">&gt;</span><span id="bc2" style="text-decoration:underline">Квартири</span><span style="display:inline-block;width:11.500px;text-align:center;font-size:8px">&gt;</span><span id="bc3" style="text-decoration:underline">Квартири 4-5кімнатні</span><span style="display:inline-block;width:11px;text-align:center;font-size:8px">&gt;</span><span>5В</span></div>
<div id="ttl" class="abs" style="left:267px;top:102.500px;font-size:24px;line-height:30px;font-weight:bold;color:#2f5a3c;white-space:nowrap;letter-spacing:.68px">П`ЯТИКІМНАТНА КВАРТИРА</div>
<div class="abs" style="left:344px;top:147px;width:192px;height:1px;background:#e3e3e3"></div>
<div id="lv1" class="abs" style="left:386px;top:162px;font-size:12.900px;line-height:16px;letter-spacing:.1px;font-weight:bold;color:#2f5a3c;white-space:nowrap">1 рівень</div>
<div id="lv2" class="abs" style="left:483px;top:162px;font-size:12.900px;line-height:16px;letter-spacing:.1px;font-weight:bold;color:#2f5a3c;white-space:nowrap">2 рівень</div>
<div class="abs" style="left:448px;top:165.500px;width:29px;height:11.500px;border-radius:6px;background:#2b5638;box-shadow:inset 0 1px 2px rgba(0,0,0,.5)"></div>
<div class="abs" style="left:447px;top:163.500px;width:15.500px;height:15.500px;border-radius:50%;background:radial-gradient(circle at 45% 40%,#ffffff 0,#ededed 45%,#c9c9c9 100%);box-shadow:0 1px 2px rgba(0,0,0,.45)"></div>
<div id="fn" class="abs" style="left:271.500px;top:549px;font-size:9px;line-height:12px;color:#2b2b2b;white-space:nowrap;letter-spacing:.21px">* Планування типове та може відрізнятися за площею в залежності від поверху</div>
<!-- floor plan -->
<svg id="plan" class="abs" style="left:285px;top:200px" width="320" height="300" viewBox="285 200 320 300" font-family="Liberation Sans, sans-serif">
<defs>
 <pattern id="grid" x="339" y="300.500" width="2.400" height="2.400" patternUnits="userSpaceOnUse"><path d="M0 0H2.400M0 0V2.400" stroke="#dbe8a6" stroke-width=".45" fill="none"/></pattern>
</defs>
<!-- base fill -->
<path d="M290,206.500H322V204.200H589.800V448.300H449.800V495.300H293.500V398.500H290Z" fill="#c7db82"/>
<!-- balcony slightly different tone -->
<path d="M290,206.500H331.500V394.500H297.800V398.500H290Z" fill="#c6da81"/>
<!-- room 1 grid -->
<path d="M339,300.500H490V335.500H485A13.500,14.500 0 0 0 471.500,350V422H455A12.500,8.500 0 0 0 442.500,430.500V488.500H304.500V401.500H347.500V394.500H339Z" fill="#c9dc86"/>
<path d="M339,300.500H490V335.500H485A13.500,14.500 0 0 0 471.500,350V422H455A12.500,8.500 0 0 0 442.500,430.500V488.500H304.500V401.500H347.500V394.500H339Z" fill="url(#grid)"/>

<!-- thin lines -->
<g fill="none" stroke="#54652d" stroke-width=".75">
 <!-- balcony outline -->
 <path d="M290.300,206.500V398.500H297.800"/>
 <path d="M293.600,209.500V394.200H297.800"/>
 <path d="M301.500,209.500V391"/>
 <path d="M293.600,227H328"/>
 <path d="M318.500,209.500V215.300H328V293H318.500V308.500H328V391H293.600"/>
 <!-- lower-left outer -->
 <path d="M293.600,398.500V495.300H297.500"/>
 <!-- room 2 -->
 <path d="M346.500,211.500V297.500"/>
 <path d="M339,222H493.400"/>
 <!-- room 1 -->
 <path d="M352.300,300.500V488.500"/>
 <path d="M339,314.300H582.800"/>
 <path d="M304.500,430.500H490.300"/>
 <path d="M426.800,442V488.500"/>
 <!-- corridor -->
 <path d="M505.500,211.500V285"/>
 <path d="M497.800,281H528.500"/>
 <path d="M519.500,284V441.500"/>
 <path d="M538,211.500V284"/>
 <path d="M533,236.600H582.500"/>
 <path d="M551.500,284.500V372"/>
 <path d="M493.500,423.500H582.500"/>
 <path d="M559.700,375V441.500"/>
 <path d="M544.600,401.200H553.500M534.300,415.700H555.500"/>
 <path d="M534.300,415.700V441.500M541.800,414.700V441.500M548,415.700V441.500M534.300,428H548M543,423.500L556.500,441.500"/>
 <!-- closet X -->
 <path d="M497.800,225.200H528.600M497.800,211.500L528.600,225.200M528.600,211.500L497.800,225.200"/>
 <!-- doors -->
 <path d="M495.600,237.200L489,262"/>
 <path d="M530.600,237.200L525.400,256.500"/>
 <path d="M333,347.500L337.500,364"/>
 <path d="M493.200,316L489,330.500"/>
 <path d="M538.200,383.300L543.500,401"/>
 <!-- kitchen counter -->
 <path d="M490,335.500H485A13.500,14.500 0 0 0 471.500,350V422H455A12.500,8.500 0 0 0 442.500,430.500V441.200"/>
 <path d="M471.500,422H490.300"/>
 <rect x="471.500" y="350.500" width="17" height="22.500"/>
 <ellipse cx="480" cy="362" rx="5.600" ry="8.400" stroke-width="1"/>
</g>
<!-- dimension ticks -->
<g fill="#3c4a1e">
 <circle cx="293.600" cy="227" r=".8"/><circle cx="328" cy="227" r=".8"/>
 <circle cx="339" cy="222" r=".8"/><circle cx="493.400" cy="222" r=".8"/>
 <circle cx="352.300" cy="394.500" r=".8"/><circle cx="352.300" cy="401.500" r=".8"/>
 <circle cx="304.500" cy="430.500" r=".8"/><circle cx="442.500" cy="430.500" r=".8"/><circle cx="490.300" cy="430.500" r=".8"/>
 <circle cx="426.800" cy="442" r=".8"/>
 <circle cx="505.500" cy="285" r=".8"/><circle cx="519.500" cy="284" r=".8"/>
 <circle cx="493.500" cy="314.300" r=".8"/><circle cx="497.500" cy="314.300" r=".8"/><circle cx="582.800" cy="314.300" r=".8"/>
 <circle cx="534.300" cy="428" r="1"/><circle cx="553.500" cy="415.700" r=".8"/>
 <circle cx="352.300" cy="300.500" r=".8"/><circle cx="346.500" cy="297.500" r=".8"/>
</g>
<!-- stove -->
<rect x="472" y="405.500" width="18" height="16.500" fill="#c9dc88" stroke="#4f6a2a" stroke-width="1.200"/>
<g fill="none" stroke="#4f6a2a" stroke-width=".8"><circle cx="476.300" cy="409.800" r="2.200"/><circle cx="484.800" cy="409.600" r="2.800"/><circle cx="476.400" cy="418" r="2.800"/><circle cx="484.800" cy="418" r="2.200"/></g>

<!-- windows -->
<g fill="#9bb95b" stroke="#6f8048" stroke-width=".6">
 <rect x="331.600" y="224" width="3" height="60"/>
 <rect x="331.600" y="326.500" width="3" height="21"/>
 <rect x="331.600" y="365.500" width="3" height="21"/>
 <rect x="297.600" y="416" width="3" height="60"/>
</g>
<g stroke="#7d8d5a" stroke-width=".6"><path d="M331.600,228H334.600M331.600,252H334.600M331.600,255H334.600M331.600,330H334.600M331.600,344H334.600M331.600,369H334.600M297.600,420H300.600M297.600,446H300.600M297.600,472H300.600"/></g>
<!-- balcony outer glazing marks -->
<g fill="#dbe6b0" stroke="#7d8d5a" stroke-width=".5"><rect x="290.300" y="236.500" width="3.300" height="5"/><rect x="290.300" y="264" width="3.300" height="5"/><rect x="290.300" y="299" width="3.300" height="5"/><rect x="290.300" y="327" width="3.300" height="5"/><rect x="290.300" y="358" width="3.300" height="5"/><rect x="290.300" y="385.500" width="3.300" height="3"/></g>

<!-- light gray walls -->
<g fill="#9b9b9b" stroke="#777" stroke-width=".5">
 <rect x="290.300" y="206.500" width="31.700" height="3" fill="#a9a9a9"/>
 <rect x="527.400" y="204.400" width="55.200" height="7" fill="#9f9f9f"/>
 <rect x="582.800" y="211.400" width="6.800" height="75"/>
 <rect x="582.600" y="340.500" width="7.200" height="81"/>
 <rect x="331.800" y="211.500" width="7.200" height="12.500"/>
 <rect x="332" y="284" width="7" height="42.500"/>
 <rect x="331.800" y="386.500" width="7" height="8"/>
 <path d="M297.800,394.500H347.500V401.500H304.300V416H297.800Z"/>
 <path d="M318.500,394.500V401.500" fill="none"/>
 <path d="M297.600,476H304.500V488.500H318.500V495.300H297.600Z"/>
 <rect x="347.800" y="297.600" width="149.800" height="2.900" fill="#b3b3b3" stroke="#8d8d8d"/>
 <rect x="493.500" y="300.500" width="4" height="5.500"/>
 <rect x="493.400" y="211.500" width="4.400" height="25.700"/>
 <rect x="528.600" y="211.500" width="4" height="25.700"/>
 <path d="M528.500,257.400H532.300V281H582.600V284.500H528.500Z"/>
 <path d="M490,335H493.500V332H497.500V335H501.500V364H498V339H490Z"/>
 <rect x="490.500" y="389.500" width="3.100" height="52"/>
 <path d="M442.200,441.300H582.400V448.300H449.800V488.500H442.200Z"/>
 <path d="M541.700,371.800H571.200V375H544.700V382H541.700Z"/>
 <rect x="541.800" y="402.500" width="2.900" height="12.200"/>
</g>
<!-- dark walls -->
<g fill="#555759" stroke="#1f1f1f" stroke-width=".9">
 <rect x="322.300" y="204.600" width="205" height="6.600"/>
 <path d="M449.800,204.600V211.200" fill="none"/>
 <rect x="582.800" y="204.600" width="6.800" height="6.600"/>
 <rect x="322.300" y="297.800" width="25.400" height="6.500"/>
 <rect x="438.700" y="297.900" width="28.700" height="6.600"/>
 <path d="M449.600,297.900V304.500" fill="none"/>
 <rect x="582.800" y="286.400" width="6.800" height="25" fill="#6c6c6c"/>
 <rect x="582.600" y="421.600" width="7.200" height="26.500" fill="#666"/>
 <rect x="318.700" y="488.800" width="131" height="6.300"/>
</g>
<!-- riser/fixture boxes -->
<g stroke="#555" stroke-width=".9">
 <path d="M486,266.200H493.500V263H497.300V297.500H486Z" fill="#8f8f8f"/>
 <path d="M487.800,268.500H494.800V286H489.500Z" fill="#a8a8a8" stroke-width=".6"/>
 <ellipse cx="492" cy="288.500" rx="3.600" ry="2" fill="#b5b5b5" stroke-width=".6"/>
 <path d="M489.600,291.500V297.500M494.600,291.500V297.500" fill="none" stroke-width=".6"/>
 <rect x="490.200" y="364.200" width="11.200" height="25.300" fill="#8f8f8f"/>
 <path d="M492,366H499.800L499,372H492.800Z" fill="#a8a8a8" stroke-width=".6"/>
 <rect x="492.600" y="373.500" width="6.600" height="14.500" fill="#a8a8a8" stroke-width=".6"/>
 <rect x="571.300" y="341.600" width="11.300" height="32.400" fill="#8f8f8f"/>
 <path d="M573,343.500H581V350L573.500,351Z" fill="#a8a8a8" stroke-width=".6"/>
 <path d="M573.200,353H580.500V372H573.800Z" fill="#a8a8a8" stroke-width=".6"/>
 <rect x="550.600" y="269.200" width="26" height="11.400" fill="#7d7d7d"/>
 <path d="M552.200,272.500L568,271V279.500H552.600Z" fill="#a5a5a5" stroke-width=".5"/>
 <path d="M570,271H574.500L575.500,279.500H571Z" fill="#a5a5a5" stroke-width=".5"/>
</g>
<!-- bathroom fixtures -->
<g fill="none" stroke="#6d7d3f" stroke-width=".7">
 <rect x="534" y="212" width="48" height="22"/>
 <rect x="536.400" y="213.800" width="44.200" height="18" rx="5"/>
 <rect x="544.200" y="216.800" width="33" height="12" rx="5.500"/>
 <ellipse cx="575.100" cy="242.300" rx="5.700" ry="8.100"/>
 <ellipse cx="575.300" cy="242.300" rx="3.700" ry="5.800"/>
 <path d="M582.400,256.400H568Q562.800,256.400 562.800,261.500T568,266.600H582.400"/>
 <path d="M577,258H569Q565,258 565,261.500T569,265H577Z"/>
 <path d="M577,256.400V266.600"/>
</g>
<circle cx="571.400" cy="222.800" r="1.200" fill="#3c4a1e"/><circle cx="576" cy="242" r=".6" fill="#3c4a1e"/>

<!-- dimension labels -->
<g fill="#3f4f22" font-size="7.400" letter-spacing="-.1" stroke="#3f4f22" stroke-width=".15">
 <text x="302.500" y="225.700">1 200</text>
 <text x="407.200" y="220.600">5 440</text>
 <text x="407.200" y="313">5 440</text>
 <text x="481.300" y="313">120</text>
 <text x="531" y="312.700">2 985</text>
 <text x="505" y="280">1 100</text>
 <text x="549" y="236">1 765</text>
 <text x="364.500" y="429.400">4 830</text>
 <text x="458" y="429.800">1 680</text>
 <text x="528.600" y="422.600">3 120</text>
 <text transform="translate(345.200,264.500) rotate(-90)">3 010</text>
 <text transform="translate(301,309) rotate(-90)">6 345</text>
 <text transform="translate(351,356.500) rotate(-90)">3 280</text>
 <text transform="translate(351,414.500) rotate(-90)">250</text>
 <text transform="translate(351,457) rotate(-90)">3 030</text>
 <text transform="translate(426,474) rotate(-90)">1 580</text>
 <text transform="translate(504.300,256.500) rotate(-90)">2 550</text>
 <text transform="translate(536.600,255.500) rotate(-90)">2 430</text>
 <text transform="translate(518.400,371.500) rotate(-90)">5 490</text>
 <text transform="translate(550.800,337) rotate(-90)">3 050</text>
 <text transform="translate(559,416.600) rotate(-90)">2 320</text>
</g>
<!-- room markers -->
<g fill="#2d5a3d"><circle cx="416.800" cy="252.500" r="11.600"/><circle cx="550.700" cy="250" r="11.600"/><circle cx="536.200" cy="347" r="11.600"/><circle cx="414" cy="369.500" r="11.600"/><circle cx="569" cy="392.500" r="11.600"/></g>
<g fill="#fff" font-size="10.500" font-weight="bold" text-anchor="middle">
 <text x="416.800" y="256.300">2</text><text x="550.700" y="253.800">3</text><text x="536.200" y="350.800">4</text><text x="414" y="373.300">1</text><text x="569" y="396.300">5</text>
</g>
</svg>
<!-- right panel content -->
<div id="menu" class="abs" style="left:913px;top:90.500px;font-size:13.800px;line-height:17px;font-weight:bold;color:#fff;white-space:nowrap;letter-spacing:-.3px">МЕНЮ</div>
<div class="abs" style="left:959.500px;top:88px;width:25px;height:25px;border-radius:50%;background:#fdd23d"></div>
<svg class="abs" style="left:964px;top:94px" width="16" height="13" viewBox="0 0 16 13"><g fill="#3b4b2a"><rect x="1" y="1.200" width="2.200" height="2.400"/><rect x="4.200" y="1.200" width="10.800" height="2.400"/><rect x="1" y="5.300" width="2.200" height="2.400"/><rect x="4.200" y="5.300" width="10.800" height="2.400"/><rect x="1" y="9.400" width="2.200" height="2.400"/><rect x="4.200" y="9.400" width="10.800" height="2.400"/></g></svg>
<div class="abs" style="left:790.800px;top:152px;width:170.400px;height:65px;background:#fdd640"></div>
<div id="zag" class="abs" style="left:790.800px;top:158px;width:170.400px;text-align:center;font-size:13px;letter-spacing:.15px;line-height:16px;font-weight:bold;color:#2f5a3c;white-space:nowrap">Загальна (м<span style="font-size:6.500px;vertical-align:4.500px">2</span>)</div>
<div id="tot" class="abs" style="left:790.800px;top:180px;width:170.400px;text-align:center;font-size:23.500px;line-height:28px;font-weight:bold;color:#2f5a3c;white-space:nowrap;letter-spacing:-.2px">155,57</div>
<div class="abs" style="left:970.200px;top:152px;width:4.200px;height:136px;background:#d7bc3f"></div>
<div class="abs" style="left:972px;top:288px;width:1px;height:114px;background:#27482f"></div>
<div class="abs" style="left:790.800px;top:241.300px;width:170.400px;height:23px;background:#fdd640"></div>
<div id="r1" class="abs" style="left:797.500px;top:245px;font-size:12.200px;line-height:16px;font-weight:bold;color:#2f5a3c;white-space:nowrap">1 РІВЕНЬ</div>
<style>
.row{position:absolute;left:791px;width:170px;height:16px;font-size:11.100px;line-height:16px;font-weight:bold;color:#fff;white-space:nowrap}
.row b{position:absolute;left:108px;font-weight:bold}
.row i{position:absolute;right:0;font-style:normal}
.row i s{text-decoration:none;font-size:6.500px;vertical-align:1.500px}
</style>
<div class="row" style="top:268.500px">Кухня<b>-</b><i>35,60 м<s>2</s></i></div>
<div class="row" style="top:292.800px">Вітальня<b>-</b><i>16,06 м<s>2</s></i></div>
<div class="row" style="top:317px">Санвузол<b>-</b><i>3,84 м<s>2</s></i></div>
<div class="row" style="top:341.300px">Передпокій<b>-</b><i>16,68 м<s>2</s></i></div>
<div class="row" style="top:365.500px">Гардеробна<b>-</b><i>1,87 м<s>2</s></i></div>
<!-- download button -->
<div class="abs" style="left:790.800px;top:433px;width:166px;height:32px;border:1.200px solid #e2c93c"></div>
<div id="dl" class="abs" style="left:815.500px;top:442.500px;font-size:9.300px;line-height:12px;font-weight:bold;color:#f3d43e;white-space:nowrap;letter-spacing:0">ЗАВАНТАЖИТИ ПЛАН</div>
<svg class="abs" style="left:923.500px;top:442px" width="10" height="12" viewBox="0 0 10 12"><path d="M5 1v6.500M2.300 5L5 7.700 7.700 5M1.200 10.300h7.600" fill="none" stroke="#f3d43e" stroke-width="1.200"/></svg>
<!-- phone -->
<div id="ph" class="abs" style="left:765.800px;top:518.300px;font-size:24.300px;line-height:28px;font-weight:bold;color:#fff;white-space:nowrap;letter-spacing:-.4px">067 315 21 66</div>
<svg class="abs" style="left:762.500px;top:549px" width="8.500" height="11" viewBox="0 0 9 12"><path d="M4.500 11C2.500 8 1 6.300 1 4.400a3.500 3.500 0 0 1 7 0C8 6.300 6.500 8 4.500 11z" fill="#e8413a"/><circle cx="4.500" cy="4.300" r="1.300" fill="#f7d9d0"/></svg>
<div id="addr" class="abs" style="left:778.500px;top:547.200px;font-size:9.800px;line-height:13px;font-weight:bold;color:#f3d43e;white-space:nowrap;text-decoration:underline;letter-spacing:-.1px">м. Київ, вул. Вишгородська 45</div>
<!-- call widget -->
<div class="abs" style="left:934px;top:511px;width:50.500px;height:50px;background:#1f5d5c;border:2px solid #f0d43a"></div>
<svg class="abs" style="left:936px;top:513px" width="46" height="46" viewBox="0 0 46 46"><path d="M13 12c-3 4-2 10 3 16s11 8 16 6l-1-6-5-1-3 2c-2-1-5-5-5-7l3-2-1-6z" fill="#e8582a" transform="translate(0,2)"/><path d="M26 16q0-6 7-6t7 6-7 6h-3l-4 3 1-4q-1-2-1-5z" fill="#f4a825" transform="translate(-2,-1)"/><circle cx="33" cy="13" r="1.200" fill="#7a4b0c"/></svg>
<div class="abs" style="left:918.300px;top:481.500px;width:56px;height:56px;border-radius:50%;background:#63c1c6"></div>
<div id="knp" class="abs" style="left:918.300px;top:498.200px;width:56px;text-align:center;font-size:9.400px;line-height:11.200px;color:#fff;white-space:nowrap;letter-spacing:-.1px">КНОПКА<br>ЗВ'ЯЗКУ</div>
<!-- realist badge -->
<div class="abs" style="left:978px;top:452px;width:22px;height:38px;background:#8e9fa3;opacity:.92"></div>
<div class="abs" style="left:978px;top:452px;width:22px;height:38px;overflow:hidden"><div style="position:absolute;left:8.500px;top:19px;transform:translate(-50%,-50%) rotate(-90deg) scale(.6,1);font-size:12.500px;line-height:14px;font-weight:bold;color:#2f4d55;white-space:nowrap">REALIST</div><div style="position:absolute;left:18px;top:19px;transform:translate(-50%,-50%) rotate(-90deg);font-size:3.800px;line-height:5px;color:#5d7378;letter-spacing:1.300px;white-space:nowrap">DIGITAL</div></div>
</div></div><!-- /pc /page -->
</div><!-- /win -->
<!-- dock -->
<div class="abs" style="left:36.500px;top:593px;width:927px;height:28px;border-radius:5.500px;background:rgba(200,200,200,.48)"></div>
<div class="abs" style="left:963px;top:593px;width:0;height:0"></div>
<svg class="abs" style="left:40.5px;top:597.700px;overflow:visible" width="17" height="17" viewBox="0 0 17 17"><defs><clipPath id="fcl"><rect x=".5" y=".5" width="16" height="16" rx="3.800"/></clipPath></defs><g clip-path="url(#fcl)"><rect x="0" y="0" width="17" height="17" fill="#2b9af3"/><path d="M9.500 0H17V17H8.500C9 12 9 10 7.500 9.500H9.800C9.500 5 9.500 3 9.500 0z" fill="#eaf0f6"/><path d="M4.600 5v2M12.400 5v2" stroke="#1c3b57" stroke-width=".9"/><path d="M3.600 11q5 3 10 0" stroke="#1c3b57" stroke-width=".8" fill="none"/></g></svg>
<div class="abs" style="left:48.0px;top:617.400px;width:2px;height:2px;border-radius:50%;background:#111"></div>
<svg class="abs" style="left:62.0px;top:597.700px;overflow:visible" width="17" height="17" viewBox="0 0 17 17"><rect x=".5" y=".5" width="16" height="16" rx="3.8" fill="#2a8ff0" /><rect x="3" y="5" width="11" height="7.500" rx="1" fill="#f4f8fc"/><path d="M3.200 5.400L8.500 9.600l5.300-4.200" fill="none" stroke="#8fb6dc" stroke-width=".8"/><rect x="10.500" y="-1.500" width="8.500" height="6" rx="3" fill="#e5433a"/></svg>
<div class="abs" style="left:69.5px;top:617.400px;width:2px;height:2px;border-radius:50%;background:#111"></div>
<svg class="abs" style="left:83.5px;top:597.700px;overflow:visible" width="17" height="17" viewBox="0 0 17 17"><rect x=".5" y=".5" width="16" height="16" rx="3.8" fill="#f2f3f5" /><circle cx="8.500" cy="8.500" r="6.600" fill="#2e8de6"/><path d="M12 5L9.400 9.400 7.600 7.600z" fill="#f2453d"/><path d="M5 12l2.600-4.400 1.800 1.800z" fill="#fff"/></svg>
<div class="abs" style="left:91.0px;top:617.400px;width:2px;height:2px;border-radius:50%;background:#111"></div>
<svg class="abs" style="left:105.5px;top:597.700px;overflow:visible" width="17" height="17" viewBox="0 0 17 17"><ellipse cx="8.500" cy="8.500" rx="8" ry="8.200" fill="#e5202f"/><ellipse cx="8.500" cy="8.500" rx="2.900" ry="5.300" fill="#707070"/><path d="M8.500 .3a8 8.200 0 0 1 0 16.400c3-1 4.800-4 4.800-8.200S11.500 1.300 8.500.3z" fill="#b3151f" opacity=".55"/></svg>
<div class="abs" style="left:113.0px;top:617.400px;width:2px;height:2px;border-radius:50%;background:#111"></div>
<svg class="abs" style="left:126.8px;top:597.700px;overflow:visible" width="17" height="17" viewBox="0 0 17 17"><rect x=".5" y=".5" width="16" height="16" rx="3.8" fill="#f7f7f7" /><path d="M.5 5V4.300A3.800 3.800 0 0 1 4.300.5h8.400a3.800 3.800 0 0 1 3.800 3.800V5z" fill="#e8453c"/><text x="8.500" y="14" font-size="9.500" text-anchor="middle" fill="#333" font-family="Liberation Sans">8</text><rect x="6" y="2" width="5" height="1.400" fill="#f9c7c3"/></svg>
<svg class="abs" style="left:148.4px;top:597.700px;overflow:visible" width="17" height="17" viewBox="0 0 17 17"><rect x=".5" y=".5" width="16" height="16" rx="3.8" fill="#f6f4ee" /><path d="M.5 5.500V4.300A3.800 3.800 0 0 1 4.300.5h8.400a3.800 3.800 0 0 1 3.800 3.800v1.200z" fill="#fbd54a"/><path d="M.5 8.500h16M.5 11.500h16" stroke="#e6e2d8" stroke-width=".5"/></svg>
<div class="abs" style="left:155.9px;top:617.400px;width:2px;height:2px;border-radius:50%;background:#111"></div>
<svg class="abs" style="left:169.8px;top:597.700px;overflow:visible" width="17" height="17" viewBox="0 0 17 17"><rect x=".5" y=".5" width="16" height="16" rx="3.8" fill="#f8f8f8" /><circle cx="4.200" cy="4.800" r="1.200" fill="#3b82f6"/><circle cx="4.200" cy="8.500" r="1.200" fill="#ef4444"/><circle cx="4.200" cy="12.200" r="1.200" fill="#f59e0b"/><path d="M6.600 4.800h7M6.600 8.500h7M6.600 12.200h7" stroke="#d4d4d4" stroke-width=".7"/></svg>
<svg class="abs" style="left:191.4px;top:597.700px;overflow:visible" width="17" height="17" viewBox="0 0 17 17"><defs><clipPath id="mcl"><rect x=".5" y=".5" width="16" height="16" rx="3.800"/></clipPath></defs><g clip-path="url(#mcl)"><rect width="17" height="17" fill="#e9efe2"/><path d="M0 0h7v8H0z" fill="#7ccf6e"/><path d="M11 0h6v9l-6 3z" fill="#8fd67c"/><path d="M0 11h5v6H0z" fill="#f3a6c0"/><path d="M6 0h4v17H6z" fill="#f7d768"/><path d="M10 10l7-3v4l-7 3z" fill="#fff"/><circle cx="8.300" cy="10.500" r="3.300" fill="#3478f6" stroke="#fff" stroke-width=".8"/><path d="M8.300 8.600l1.500 3.500-1.500-.7-1.500.7z" fill="#fff"/></g></svg>
<svg class="abs" style="left:212.8px;top:597.700px;overflow:visible" width="17" height="17" viewBox="0 0 17 17"><rect x=".5" y=".5" width="16" height="16" rx="3.8" fill="#f23b54" /><path d="M6.500 12V5l5.500-1.300v7" fill="none" stroke="#fff" stroke-width="1.100"/><ellipse cx="5.400" cy="12" rx="1.500" ry="1.200" fill="#fff"/><ellipse cx="10.900" cy="10.800" rx="1.500" ry="1.200" fill="#fff"/></svg>
<svg class="abs" style="left:234.1px;top:597.700px;overflow:visible" width="17" height="17" viewBox="0 0 17 17"><path d="M8.500 1a7.500 7.500 0 0 1 7.300 9.200 4.300 4.300 0 0 1-5.600 5.600A7.500 7.500 0 0 1 1.200 6.800 4.300 4.300 0 0 1 6.800 1.200 7.500 7.500 0 0 1 8.500 1z" fill="#1296e0"/><text x="8.500" y="12.600" font-size="11.500" font-weight="bold" text-anchor="middle" fill="#fff" font-family="Liberation Sans">S</text></svg>
<div class="abs" style="left:241.6px;top:617.400px;width:2px;height:2px;border-radius:50%;background:#111"></div>
<svg class="abs" style="left:255.9px;top:597.700px;overflow:visible" width="17" height="17" viewBox="0 0 17 17"><rect x=".5" y=".5" width="16" height="16" rx="3.8" fill="#4dc247" /><path d="M8.500 3.200a5.200 5.200 0 0 1 0 10.400c-1 0-1.900-.3-2.700-.7L3.200 13.800l.9-2.500A5.200 5.200 0 0 1 8.500 3.200z" fill="none" stroke="#fff" stroke-width="1.100"/><path d="M6.600 6.200c.2 2 1.700 3.600 3.800 4.200l.8-1-1.200-.8-.6.400c-.7-.3-1.200-.9-1.500-1.600l.5-.5-.7-1.300z" fill="#fff"/></svg>
<div class="abs" style="left:263.4px;top:617.400px;width:2px;height:2px;border-radius:50%;background:#111"></div>
<svg class="abs" style="left:277.3px;top:597.700px;overflow:visible" width="17" height="17" viewBox="0 0 17 17"><circle cx="8.500" cy="8.500" r="8" fill="#f4f4f4"/><path d="M1 6h15v5H1z" fill="#d9272e"/><path d="M11 .9a8 8 0 0 1 5.400 7.600c0 1-.2 2-.5 2.800C15 8 13.500 4 11 .9z" fill="#c0181f"/><text x="7.500" y="10.400" font-size="5.200" font-weight="bold" text-anchor="middle" fill="#fff" font-family="Liberation Sans">PDF</text></svg>
<div class="abs" style="left:284.8px;top:617.400px;width:2px;height:2px;border-radius:50%;background:#111"></div>
<svg class="abs" style="left:298.9px;top:597.700px;overflow:visible" width="17" height="17" viewBox="0 0 17 17"><rect x=".5" y=".5" width="16" height="16" rx="3.8" fill="#2a8bf0" /><path d="M8.500 3.500L4.800 12M8.500 3.500l3.700 8.500M3.400 10.200h10.200" stroke="#fff" stroke-width="1.300" fill="none"/><circle cx="14.500" cy="2.200" r="3" fill="#e5433a"/></svg>
<svg class="abs" style="left:320.5px;top:597.700px;overflow:visible" width="17" height="17" viewBox="0 0 17 17"><rect x=".5" y=".5" width="16" height="16" rx="3.8" fill="#8e8e90" /><circle cx="8.500" cy="8.500" r="5.800" fill="#4b4b4d" stroke="#2b2b2d" stroke-width="1"/><circle cx="8.500" cy="8.500" r="3.300" fill="none" stroke="#a8a8aa" stroke-width="1.200"/><circle cx="8.500" cy="8.500" r="1.200" fill="#2b2b2d"/><circle cx="14.500" cy="2.200" r="3" fill="#e5433a"/></svg>
<svg class="abs" style="left:342.5px;top:597.700px;overflow:visible" width="17" height="17" viewBox="0 0 17 17"><rect x=".5" y=".5" width="16" height="16" rx="3.8" fill="#dcdcdc" /><rect x="4.200" y="2.600" width="8.600" height="11.800" rx="1.500" fill="#4a4642"/><rect x="5.300" y="3.700" width="6.400" height="2.400" fill="#8a857c"/><g fill="#d8d3c8"><rect x="5.300" y="7.200" width="1.600" height="1.500"/><rect x="7.700" y="7.200" width="1.600" height="1.500"/><rect x="5.300" y="9.500" width="1.600" height="1.500"/><rect x="7.700" y="9.500" width="1.600" height="1.500"/><rect x="5.300" y="11.800" width="1.600" height="1.500"/><rect x="7.700" y="11.800" width="1.600" height="1.500"/></g><g fill="#f0953a"><rect x="10.100" y="7.200" width="1.600" height="1.500"/><rect x="10.100" y="9.500" width="1.600" height="3.800"/></g></svg>
<svg class="abs" style="left:363.7px;top:597.700px;overflow:visible" width="17" height="17" viewBox="0 0 17 17"><rect x=".5" y=".5" width="16" height="16" rx="3.4" fill="#330000" /><text x="8.500" y="12.300" font-size="9.500" font-weight="bold" text-anchor="middle" fill="#ff9a00" font-family="Liberation Sans">Ai</text></svg>
<div class="abs" style="left:371.2px;top:617.400px;width:2px;height:2px;border-radius:50%;background:#111"></div>
<svg class="abs" style="left:385.1px;top:597.700px;overflow:visible" width="17" height="17" viewBox="0 0 17 17"><rect x=".5" y=".5" width="16" height="16" rx="3.4" fill="#49021f" /><text x="8.500" y="12.300" font-size="9.500" font-weight="bold" text-anchor="middle" fill="#ff3366" font-family="Liberation Sans">Id</text></svg>
<div class="abs" style="left:392.6px;top:617.400px;width:2px;height:2px;border-radius:50%;background:#111"></div>
<svg class="abs" style="left:406.5px;top:597.700px;overflow:visible" width="17" height="17" viewBox="0 0 17 17"><rect x=".5" y=".5" width="16" height="16" rx="3.8" fill="#f8f8f8" /><rect x="5.500" y="3.200" width="9" height="10.600" rx=".8" fill="#2b7cd3"/><path d="M5.500 6.700h9v3.600h-9z" fill="#185abd"/><rect x="2.300" y="5.300" width="6.600" height="6.400" rx=".7" fill="#1a4f9f"/><text x="5.600" y="10.600" font-size="5.200" font-weight="bold" text-anchor="middle" fill="#fff" font-family="Liberation Sans">W</text></svg>
<div class="abs" style="left:414.0px;top:617.400px;width:2px;height:2px;border-radius:50%;background:#111"></div>
<svg class="abs" style="left:427.9px;top:597.700px;overflow:visible" width="17" height="17" viewBox="0 0 17 17"><rect x=".5" y=".5" width="16" height="16" rx="3.8" fill="#f8f8f8" /><rect x="5.500" y="3.200" width="9" height="10.600" rx=".8" fill="#21a366"/><path d="M5.500 6.700h9v3.600h-9z" fill="#107c41"/><rect x="2.300" y="5.300" width="6.600" height="6.400" rx=".7" fill="#0b6a37"/><text x="5.600" y="10.600" font-size="5.200" font-weight="bold" text-anchor="middle" fill="#fff" font-family="Liberation Sans">X</text></svg>
<div class="abs" style="left:435.4px;top:617.400px;width:2px;height:2px;border-radius:50%;background:#111"></div>
<svg class="abs" style="left:449.5px;top:597.700px;overflow:visible" width="17" height="17" viewBox="0 0 17 17"><path d="M1.500 9C3 5 7 3 11 4c-3 .5-5.500 2.500-6.500 6z" fill="#6bbd45"/><path d="M9.500 1c1 2.500 1.500 6 0 9.500" stroke="#5aa53a" stroke-width="1.600" fill="none"/><path d="M16 9.500c-1 4-5 6.500-9.500 6 3.500-1 6-3 6.800-6.500z" fill="#2a8fd6"/><path d="M3 13c2 2 6 2.500 8.500 1" stroke="#c9c9c9" stroke-width="1" fill="none"/></svg>
<div class="abs" style="left:457.0px;top:617.400px;width:2px;height:2px;border-radius:50%;background:#111"></div>
<svg class="abs" style="left:471.1px;top:597.700px;overflow:visible" width="17" height="17" viewBox="0 0 17 17"><rect x=".5" y=".5" width="16" height="16" rx="3.6" fill="#d9482b" /><circle cx="8.500" cy="8.500" r="5.600" fill="#fff"/><path d="M5.500 10.800l2.300-2.300m0 0v1.800m0-1.800H6M11.500 6.200L9.200 8.500m0 0V6.700m0 1.800H11" stroke="#d9482b" stroke-width="1" fill="none"/></svg>
<div class="abs" style="left:478.6px;top:617.400px;width:2px;height:2px;border-radius:50%;background:#111"></div>
<svg class="abs" style="left:492.5px;top:597.700px;overflow:visible" width="17" height="17" viewBox="0 0 17 17"><rect x="1" y="2" width="10" height="10" rx="1.500" fill="#2f7bd6"/><rect x="6" y="6" width="10" height="10" rx="1.500" fill="#d8432f"/><path d="M6 6h5v6H6z" fill="#7a4f7a"/></svg>
<div class="abs" style="left:500.0px;top:617.400px;width:2px;height:2px;border-radius:50%;background:#111"></div>
<svg class="abs" style="left:514.0px;top:597.700px;overflow:visible" width="17" height="17" viewBox="0 0 17 17"><rect x=".5" y=".5" width="16" height="16" rx="3.8" fill="#7360f2" /><path d="M4.200 5.200q0-1.600 1.600-1.600h5.400q1.600 0 1.600 1.600v4.600q0 1.600-1.600 1.600H8.600l-2.200 2v-2H5.800q-1.600 0-1.600-1.600z" fill="none" stroke="#fff" stroke-width="1"/><path d="M6.800 6c.2 1.700 1.400 3 3 3.500" stroke="#fff" stroke-width="1.100" fill="none"/></svg>
<div class="abs" style="left:521.5px;top:617.400px;width:2px;height:2px;border-radius:50%;background:#111"></div>
<svg class="abs" style="left:535.8px;top:597.700px;overflow:visible" width="17" height="17" viewBox="0 0 17 17"><circle cx="8.500" cy="8.500" r="8" fill="#f0942a"/><path d="M3.500 10.500c0-3 4-3 5 0s5 3 5 0-4-3-5 0" fill="none" stroke="#fff" stroke-width="1.500"/><circle cx="10" cy="5" r="1.300" fill="#fff"/></svg>
<div class="abs" style="left:543.3px;top:617.400px;width:2px;height:2px;border-radius:50%;background:#111"></div>
<svg class="abs" style="left:566.5px;top:597.700px;overflow:visible" width="17" height="17" viewBox="0 0 17 17"><rect x="2" y="1.500" width="13" height="14.500" fill="#f2c35a"/><rect x="2" y="1.500" width="13" height="4" fill="#f7e0a4"/><rect x="2" y="9" width="13" height="7" fill="#e0a23c"/><rect x="4" y="3" width="3" height="5" fill="#fff7e2"/></svg>
<svg class="abs" style="left:588.8px;top:597.700px;overflow:visible" width="17" height="17" viewBox="0 0 17 17"><path d="M1.500 8.500h4M4 6.800l1.700 1.700L4 10.200" stroke="#8a9a3a" stroke-width=".8" fill="none"/><path d="M7 2v13" stroke="#8a9a3a" stroke-width=".8"/><text x="12" y="13" font-size="12" font-weight="bold" text-anchor="middle" fill="#9aa93a" font-family="Liberation Sans">e</text></svg>
<div class="abs" style="left:596.3px;top:617.400px;width:2px;height:2px;border-radius:50%;background:#111"></div>
<svg class="abs" style="left:610.5px;top:597.700px;overflow:visible" width="17" height="17" viewBox="0 0 17 17"><rect x=".5" y=".5" width="16" height="16" rx="3" fill="#e9eef5" /><rect x="2" y="2.500" width="13" height="9" fill="#5c8fd0"/><path d="M2 9l4-3 3 2.500 3-2 3 2.500v2.500H2z" fill="#e8eef6"/><rect x="9" y="9.500" width="5.500" height="5" fill="#2d2d2d"/><rect x="3" y="11" width="5" height="3" fill="#3a5a80"/></svg>
<svg class="abs" style="left:640.2px;top:596.800px" width="19.500" height="19.500" viewBox="0 0 17 17"><path d="M3.500,1H11l2.500,2.500V16H3.500z" fill="#fafafa" stroke="#cfcfcf" stroke-width=".4"/><path d="M5,5h6M5,7h6M5,9h4M6.500,13h3" stroke="#bdbdbd" stroke-width=".6"/></svg>
<svg class="abs" style="left:661.2px;top:596.800px" width="19.500" height="19.500" viewBox="0 0 17 17"><rect x="1" y="1" width="15" height="15" fill="#fdfdfd" stroke="#d0d0d0" stroke-width=".4"/><path d="M3 4h9M3 6h7M3 8h9M3 10h6" stroke="#c9c9c9" stroke-width=".6"/><rect x="10.500" y="10.500" width="5.500" height="5.500" rx="1" fill="#3a8ee6"/><rect x="11.700" y="11.700" width="3.100" height="3.100" rx=".5" fill="#cfe4fb"/></svg>
<svg class="abs" style="left:682.8px;top:596.800px" width="19.500" height="19.500" viewBox="0 0 17 17"><rect x="1" y="1" width="15" height="15" fill="#fdfdfd" stroke="#d0d0d0" stroke-width=".4"/><rect x="2" y="3" width="13" height="3" fill="#c98a4a"/><path d="M3 8h9M3 10h7" stroke="#c9c9c9" stroke-width=".6"/><rect x="10.500" y="10.500" width="5.500" height="5.500" rx="1" fill="#3a8ee6"/><rect x="11.700" y="11.700" width="3.100" height="3.100" rx=".5" fill="#cfe4fb"/></svg>
<svg class="abs" style="left:704.2px;top:596.800px" width="19.500" height="19.500" viewBox="0 0 17 17"><rect x="1" y="1" width="15" height="15" fill="#fdfdfd" stroke="#d0d0d0" stroke-width=".4"/><rect x="1" y="1" width="15" height="15" fill="#dfe4ea"/><rect x="3" y="3" width="9" height="7" fill="#f7f7f7"/><rect x="10.500" y="10.500" width="5.500" height="5.500" rx="1" fill="#3a8ee6"/><rect x="11.700" y="11.700" width="3.100" height="3.100" rx=".5" fill="#cfe4fb"/></svg>
<svg class="abs" style="left:725.9px;top:596.800px" width="19.500" height="19.500" viewBox="0 0 17 17"><rect x="1" y="1" width="15" height="15" fill="#fdfdfd" stroke="#d0d0d0" stroke-width=".4"/><path d="M3 3h8M3 5h6M3 7h8M3 9h5M3 11h7" stroke="#b9c3cc" stroke-width=".6"/><rect x="10.500" y="10.500" width="5.500" height="5.500" rx="1" fill="#3a8ee6"/><rect x="11.700" y="11.700" width="3.100" height="3.100" rx=".5" fill="#cfe4fb"/></svg>
<svg class="abs" style="left:747.5px;top:596.800px" width="19.500" height="19.500" viewBox="0 0 17 17"><rect x="1" y="1" width="15" height="15" fill="#fdfdfd" stroke="#d0d0d0" stroke-width=".4"/><path d="M3 3h8M3 5h6M3 7h8M3 9h5M3 11h7" stroke="#b9c3cc" stroke-width=".6"/><rect x="10.500" y="10.500" width="5.500" height="5.500" rx="1" fill="#3a8ee6"/><rect x="11.700" y="11.700" width="3.100" height="3.100" rx=".5" fill="#cfe4fb"/></svg>
<svg class="abs" style="left:769.0px;top:596.800px" width="19.500" height="19.500" viewBox="0 0 17 17"><rect x="1" y="1" width="15" height="15" fill="#fdfdfd" stroke="#d0d0d0" stroke-width=".4"/><path d="M3 3h8M3 5h6M3 7h8M3 9h5M3 11h7" stroke="#b9c3cc" stroke-width=".6"/><rect x="10.500" y="10.500" width="5.500" height="5.500" rx="1" fill="#3a8ee6"/><rect x="11.700" y="11.700" width="3.100" height="3.100" rx=".5" fill="#cfe4fb"/></svg>
<svg class="abs" style="left:790.5px;top:596.800px" width="19.500" height="19.500" viewBox="0 0 17 17"><rect x="1" y="1" width="15" height="15" fill="#fdfdfd" stroke="#d0d0d0" stroke-width=".4"/><path d="M3 4h9M3 6h7M3 8h9M3 10h6" stroke="#c9c9c9" stroke-width=".6"/><rect x="10.500" y="10.500" width="5.500" height="5.500" rx="1" fill="#3a8ee6"/><rect x="11.700" y="11.700" width="3.100" height="3.100" rx=".5" fill="#cfe4fb"/></svg>
<svg class="abs" style="left:811.8px;top:596.800px" width="19.500" height="19.500" viewBox="0 0 17 17"><rect x="1" y="1" width="15" height="15" fill="#fdfdfd" stroke="#d0d0d0" stroke-width=".4"/><path d="M3 3h8M3 5h6M3 7h8M3 9h5M3 11h7" stroke="#b9c3cc" stroke-width=".6"/><rect x="10.500" y="10.500" width="5.500" height="5.500" rx="1" fill="#3a8ee6"/><rect x="11.700" y="11.700" width="3.100" height="3.100" rx=".5" fill="#cfe4fb"/></svg>
<svg class="abs" style="left:833.2px;top:596.800px" width="19.500" height="19.500" viewBox="0 0 17 17"><rect x="1" y="1" width="15" height="15" fill="#fdfdfd" stroke="#d0d0d0" stroke-width=".4"/><path d="M3 3h8M3 5h6M3 7h8M3 9h5M3 11h7" stroke="#b9c3cc" stroke-width=".6"/><rect x="10.500" y="10.500" width="5.500" height="5.500" rx="1" fill="#3a8ee6"/><rect x="11.700" y="11.700" width="3.100" height="3.100" rx=".5" fill="#cfe4fb"/></svg>
<svg class="abs" style="left:855.0px;top:596.800px" width="19.500" height="19.500" viewBox="0 0 17 17"><rect x="1" y="1" width="15" height="15" fill="#fdfdfd" stroke="#d0d0d0" stroke-width=".4"/><rect x="1" y="1" width="15" height="15" fill="#d9e2c8"/><rect x="2" y="2" width="13" height="3" fill="#8fae5a"/><path d="M2 7h13M2 9h13M2 11h13" stroke="#fff" stroke-width=".6"/><rect x="9.500" y="9.500" width="6.500" height="6.500" rx="1" fill="#1f9d55"/></svg>
<svg class="abs" style="left:876.5px;top:596.800px" width="19.500" height="19.500" viewBox="0 0 17 17"><rect x="1" y="1" width="15" height="15" fill="#fdfdfd" stroke="#d0d0d0" stroke-width=".4"/><path d="M3 3h8M3 5h6M3 7h8M3 9h5M3 11h7" stroke="#b9c3cc" stroke-width=".6"/><rect x="10.500" y="10.500" width="5.500" height="5.500" rx="1" fill="#3a8ee6"/><rect x="11.700" y="11.700" width="3.100" height="3.100" rx=".5" fill="#cfe4fb"/></svg>
<svg class="abs" style="left:898.2px;top:596.800px" width="19.500" height="19.500" viewBox="0 0 17 17"><rect x="1" y="1" width="15" height="15" fill="#fdfdfd" stroke="#d0d0d0" stroke-width=".4"/><rect x="1" y="3" width="15" height="10" fill="#e4e4e4"/><rect x="2" y="4" width="9" height="6" fill="#f6f6f6"/><ellipse cx="12.500" cy="12.500" rx="3" ry="3.200" fill="none" stroke="#e5202f" stroke-width="1.300"/></svg>
<svg class="abs" style="left:919.8px;top:596.800px" width="19.500" height="19.500" viewBox="0 0 17 17"><rect x="1" y="1" width="15" height="15" fill="#fdfdfd" stroke="#d0d0d0" stroke-width=".4"/><path d="M3 3h8M3 5h6M3 7h8M3 9h5M3 11h7" stroke="#b9c3cc" stroke-width=".6"/><rect x="10.500" y="10.500" width="5.500" height="5.500" rx="1" fill="#3a8ee6"/><rect x="11.700" y="11.700" width="3.100" height="3.100" rx=".5" fill="#cfe4fb"/></svg>
<svg class="abs" style="left:941.500px;top:597.200px" width="17" height="18" viewBox="0 0 17 17"><path d="M3 3.500h11l-1.200 12.500H4.200z" fill="#e9e9e9" stroke="#c2c2c2" stroke-width=".5"/><ellipse cx="8.500" cy="3.500" rx="5.500" ry="1.300" fill="#f7f7f7" stroke="#bdbdbd" stroke-width=".5"/><path d="M5.500 6l.6 8M8.500 6v8M11.500 6l-.6 8" stroke="#cfcfcf" stroke-width=".6"/></svg>
<div class="abs" style="left:560.500px;top:597px;width:1px;height:19px;background:rgba(90,90,90,.55)"></div>
<div class="abs" style="left:635px;top:597px;width:1px;height:19px;background:rgba(90,90,90,.55)"></div>
</div><!-- /screen -->
</body>
</html>
